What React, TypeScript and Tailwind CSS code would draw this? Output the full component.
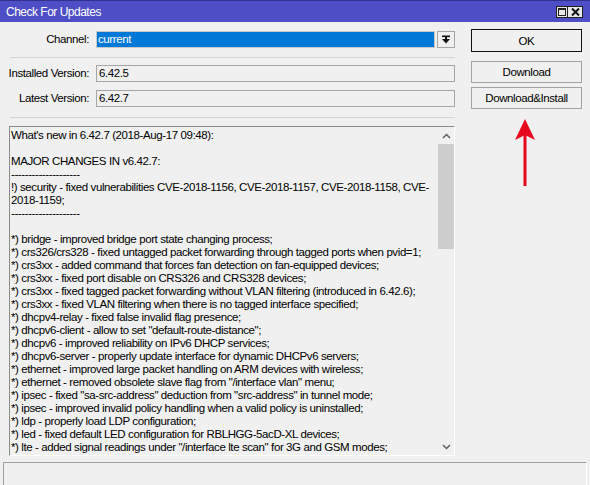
import React from "react";

const DASHES = "--------------------";

const NOTES = [
  "What's new in 6.42.7 (2018-Aug-17 09:48):",
  "",
  "MAJOR CHANGES IN v6.42.7:",
  DASHES,
  "!) security - fixed vulnerabilities CVE-2018-1156, CVE-2018-1157, CVE-2018-1158, CVE-",
  "2018-1159;",
  DASHES,
  "",
  "*) bridge - improved bridge port state changing process;",
  "*) crs326/crs328 - fixed untagged packet forwarding through tagged ports when pvid=1;",
  "*) crs3xx - added command that forces fan detection on fan-equipped devices;",
  "*) crs3xx - fixed port disable on CRS326 and CRS328 devices;",
  "*) crs3xx - fixed tagged packet forwarding without VLAN filtering (introduced in 6.42.6);",
  "*) crs3xx - fixed VLAN filtering when there is no tagged interface specified;",
  "*) dhcpv4-relay - fixed false invalid flag presence;",
  "*) dhcpv6-client - allow to set \"default-route-distance\";",
  "*) dhcpv6 - improved reliability on IPv6 DHCP services;",
  "*) dhcpv6-server - properly update interface for dynamic DHCPv6 servers;",
  "*) ethernet - improved large packet handling on ARM devices with wireless;",
  "*) ethernet - removed obsolete slave flag from \"/interface vlan\" menu;",
  "*) ipsec - fixed \"sa-src-address\" deduction from \"src-address\" in tunnel mode;",
  "*) ipsec - improved invalid policy handling when a valid policy is uninstalled;",
  "*) ldp - properly load LDP configuration;",
  "*) led - fixed default LED configuration for RBLHGG-5acD-XL devices;",
  "*) lte - added signal readings under \"/interface lte scan\" for 3G and GSM modes;",
];

function Field({ label, value }: { label: string; value: string }) {
  return (
    <div className="flex items-center h-[17px]">
      <span className="w-[90px] text-right pr-[1px] whitespace-nowrap">{label}</span>
      <div className="ml-[6px] flex-1 h-[17px] border border-[#a5a5a5] bg-[#f0f0f0] px-[2px] leading-[15px]">
        {value}
      </div>
    </div>
  );
}

function WinButton({ label, primary }: { label: string; primary?: boolean }) {
  return (
    <button
      className={`w-[111px] bg-[#f0f0f0] text-center leading-[20px] ${primary ? "h-[23px] border border-[#111]" : "h-[22px] border border-[#a3a3a3]"}`}
    >
      {label}
    </button>
  );
}

export default function App() {
  return (
    <div className="relative w-[590px] h-[485px] bg-[#f0f0f0] flex flex-col overflow-hidden text-[11.5px] tracking-[-0.4px] text-black font-['Liberation_Sans',Arial,sans-serif]">
      {/* title bar */}
      <div className="h-[22px] bg-[#4e4ec6] border-t border-[#33338f] flex items-center justify-between pl-[6px] pr-[7px]">
        <span className="text-white text-[12px] tracking-[-0.5px] leading-none">Check For Updates</span>
        <div className="flex">
          <div className="w-[12px] h-[12px] bg-[#e8e8e8] border border-[#222] flex items-center justify-center">
            <div className="w-[8px] h-[8px] border border-[#222] border-t-2" />
          </div>
          <div className="w-[15px] h-[12px] bg-[#e8e8e8] border border-[#222] border-l-0 flex items-center justify-center">
            <svg width="9" height="8" viewBox="0 0 9 8">
              <path d="M1 0.5 L8 7.5 M8 0.5 L1 7.5" stroke="#111" strokeWidth="2" />
            </svg>
          </div>
        </div>
      </div>

      {/* body */}
      <div className="flex flex-1 min-h-0">
        {/* left column */}
        <div className="w-[455px] flex flex-col pt-[9px]">
          <div className="flex items-center h-[17px]">
            <span className="w-[90px] text-right pr-[1px]">Channel:</span>
            <div className="ml-[6px] flex-1 h-[17px] border border-[#c8c8c8] bg-[#0078d7] text-white px-[1px] leading-[15px]">
              current
            </div>
            <div className="ml-[2px] w-[18px] h-[17px] border border-[#a5a5a5] bg-[#f0f0f0] flex items-center justify-center">
              <svg width="8" height="9" viewBox="0 0 8 9">
                <rect x="0" y="0.5" width="8" height="1.6" fill="#111" />
                <rect x="3" y="2" width="2" height="2" fill="#111" />
                <path d="M0 4 L8 4 L4 8.5 Z" fill="#111" />
              </svg>
            </div>
          </div>
          <div className="ml-[10px] mt-[9px] mb-[7px] h-[1px] bg-[#d4d4d4]" />
          <div className="flex flex-col gap-[8px]">
            <Field label="Installed Version:" value="6.42.5" />
            <Field label="Latest Version:" value="6.42.7" />
          </div>
          <div className="ml-[10px] mt-[10px] mb-[8px] h-[1px] bg-[#d4d4d4]" />

          {/* release notes box */}
          <div className="ml-[9px] h-[331px] flex border-t border-l border-[#8c8c8c] border-r border-b border-r-white border-b-white">
            <div className="flex-1 overflow-hidden pl-[1px] pt-[2px] whitespace-pre leading-[13px]">
              {NOTES.map((line, i) => (
                <div key={i} className="h-[13px]">
                  {line}
                </div>
              ))}
            </div>
            <div className="w-[16px] flex flex-col bg-[#f0f0f0]">
              <div className="h-[17px] flex items-center justify-center">
                <svg width="9" height="6" viewBox="0 0 9 6">
                  <path d="M1 5 L4.5 1.5 L8 5" stroke="#606060" strokeWidth="1.5" fill="none" />
                </svg>
              </div>
              <div className="h-[105px] bg-[#cdcdcd]" />
              <div className="flex-1" />
              <div className="h-[17px] flex items-center justify-center">
                <svg width="9" height="6" viewBox="0 0 9 6">
                  <path d="M1 1 L4.5 4.5 L8 1" stroke="#606060" strokeWidth="1.5" fill="none" />
                </svg>
              </div>
            </div>
          </div>
        </div>

        {/* right column */}
        <div className="ml-[16px] pt-[7px] flex flex-col">
          <WinButton label="OK" primary />
          <div className="mt-[9px] flex flex-col gap-[4px]">
            <WinButton label="Download" />
            <WinButton label="Download&Install" />
          </div>
        </div>
      </div>

      {/* status bar */}
      <div className="mx-[3px] mt-[6px] h-[23px] border-t border-l border-[#a0a0a0] border-r border-r-white" />

      {/* annotation arrow */}
      <svg className="absolute left-[514px] top-[118px]" width="22" height="70" viewBox="0 0 22 70">
        <path d="M11 1 L21 22 L11 17 L1 22 Z" fill="#e8081e" />
        <rect x="9.5" y="16" width="3" height="52" fill="#e8081e" />
      </svg>
    </div>
  );
}
